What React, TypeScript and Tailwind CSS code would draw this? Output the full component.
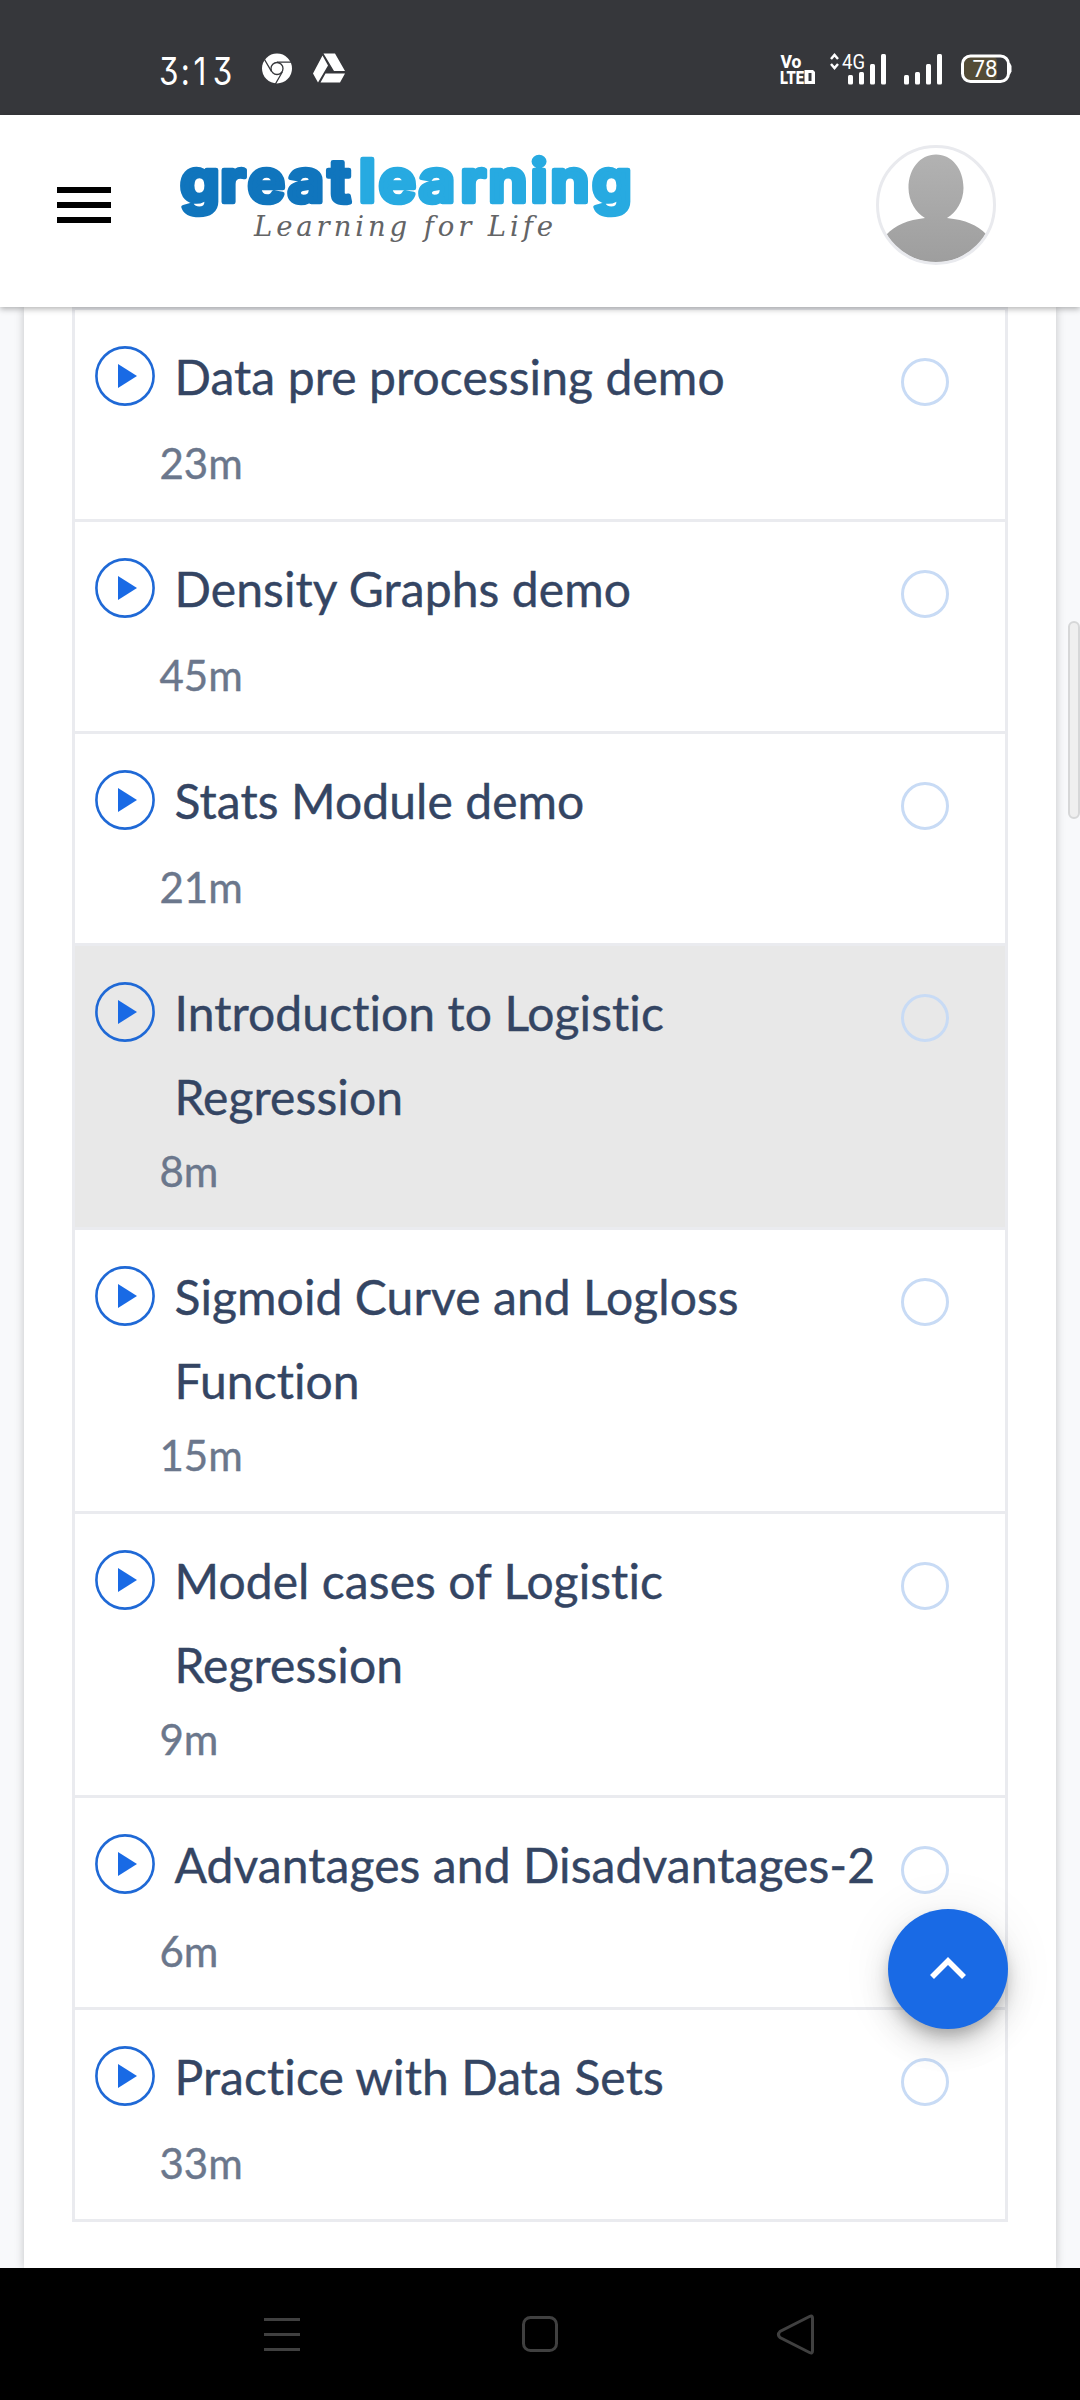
const lessons = [
  { title: ['Data pre processing demo'], time: '23m' },
  { title: ['Density Graphs demo'], time: '45m' },
  { title: ['Stats Module demo'], time: '21m' },
  { title: ['Introduction to Logistic', 'Regression'], time: '8m', active: true },
  { title: ['Sigmoid Curve and Logloss', 'Function'], time: '15m' },
  { title: ['Model cases of Logistic', 'Regression'], time: '9m' },
  { title: ['Advantages and Disadvantages-2'], time: '6m' },
  { title: ['Practice with Data Sets'], time: '33m' },
];

function StatusBar() {
  return (
    <div className="flex h-[115px] shrink-0 items-start bg-[#36373b] pl-[159px] pt-[53px] text-white">
      <svg className="block shrink-0 overflow-visible" width="103" height="34" viewBox="159 53 103 34">
        <g transform="translate(159 85) scale(0.84 1)">
          <text x="0 26 41 64" y="0" fill="#fff" fontFamily="Inter" fontSize="37.5" className="[font-feature-settings:'cv09']">3:13</text>
        </g>
      </svg>
      <svg className="block shrink-0" width="84" height="32" viewBox="262 56 84 32">
        <circle cx="277" cy="71.5" r="15" fill="#fff" />
        <circle cx="277" cy="71.5" r="6" fill="none" stroke="#36373b" strokeWidth="1.3" />
        <path d="M277 65.2H291M271.6 74.7L264.5 62.5M282.4 74.7L275.4 87" stroke="#36373b" strokeWidth="1.3" />
        <path d="M323.500 56.500H335L345 74H334Z M322.500 58.500L328 68.500L318 85.500L313 76.500Z M325.500 76.500H345L340 85.500H320.500Z" fill="#fff" />
      </svg>
      <svg className="ml-[434px] block shrink-0 overflow-visible" width="232" height="32" viewBox="780 56 232 32" fill="#fff">
        <text x="780.5" y="71" fontFamily="Roboto" fontWeight="800" fontSize="19" textLength="21" lengthAdjust="spacingAndGlyphs">Vo</text>
        <text x="780" y="87" fontFamily="Roboto" fontWeight="900" fontSize="19" textLength="24" lengthAdjust="spacingAndGlyphs">LTE</text>
        <path fillRule="evenodd" d="M804.500 73H813L815 75V87H804.500ZM808.500 76V84H811.500V76Z" />
        <path d="M831 62L834.500 58L838 62M831 67L834.500 71L838 67" fill="none" stroke="#fff" strokeWidth="2.500" />
        <text x="842" y="71.500" fontFamily="Roboto" fontSize="21" textLength="23" lengthAdjust="spacingAndGlyphs">4G</text>
        <rect x="848" y="78" width="5" height="9.500" rx="1.500" />
        <rect x="859" y="75" width="5" height="12.500" rx="1.500" />
        <rect x="870" y="67" width="5" height="20.500" rx="1.500" />
        <rect x="881" y="57" width="5" height="30.500" rx="1.500" />
        <rect x="904" y="78" width="5" height="9.500" rx="1.500" />
        <rect x="915" y="75" width="5" height="12.500" rx="1.500" />
        <rect x="926" y="67" width="5" height="20.500" rx="1.500" />
        <rect x="937" y="57" width="5" height="30.500" rx="1.500" />
        <rect x="963" y="59" width="34" height="25" rx="5" fill="#544c36" />
        <rect x="962.500" y="59" width="46" height="25.500" rx="8" fill="none" stroke="#fff" strokeWidth="3" />
        <path d="M1009 66h1l1.500 3v5.500l-1.500 3h-1z" />
        <text x="972.500" y="80" fontFamily="Roboto" fontSize="23" textLength="25" lengthAdjust="spacingAndGlyphs">78</text>
      </svg>
    </div>
  );
}

function Header() {
  return (
    <header className="relative z-10 flex h-[192px] shrink-0 items-start bg-white pl-[57px] pt-[30px] shadow-[0_2px_6px_rgba(0,0,0,0.3)]">
      <div className="mt-[42px] flex w-[54px] flex-col gap-[9px]">
        <div className="h-[6px] bg-black" />
        <div className="h-[6px] bg-black" />
        <div className="h-[6px] bg-black" />
      </div>
      <svg className="ml-[59px] block" width="480" height="110" viewBox="170 145 480 110">
        <g transform="translate(180 201.500) scale(1.07 1)" fontFamily="Inter" fontWeight="700" fontSize="59" strokeWidth="4.500" strokeLinejoin="round" strokeLinecap="round">
          <text x="0 37.500 63 100.500 138" y="0" fill="#1075bd" stroke="#1075bd">great</text>
          <text x="167 185.500 223 262 288 327.500 346 385" y="0" fill="#27aae1" stroke="#27aae1">learning</text>
        </g>
        <text x="254" y="236" fontFamily="'DejaVu Serif'" fontStyle="italic" fontSize="27.500" fill="#636466" textLength="299">Learning for Life</text>
      </svg>
      <svg className="ml-[226px] block" width="120" height="120" viewBox="0 0 120 120">
        <defs>
          <linearGradient id="person" x1="0" y1="10" x2="0" y2="117" gradientUnits="userSpaceOnUse">
            <stop stopColor="#b2b2b2" />
            <stop offset="1" stopColor="#9e9e9e" />
          </linearGradient>
          <clipPath id="round"><circle cx="60" cy="60" r="57.500" /></clipPath>
        </defs>
        <g clipPath="url(#round)" fill="url(#person)">
          <path d="M60 9.500C76 9.500 87.500 24 87.500 43C87.500 56 80 68 71 73C90 75 101 80 110 89V120H10V90C19 80 32 75 49 73C40 68 32.500 56 32.500 43C32.500 24 44 9.500 60 9.500Z" />
        </g>
        <circle cx="60" cy="60" r="58.500" fill="none" stroke="#e9eaee" strokeWidth="3" />
      </svg>
    </header>
  );
}

function Lesson({ title, time, active }: { title: string[]; time: string; active?: boolean }) {
  const two = title.length > 1;
  return (
    <li className={`flex items-start border-b-[3px] border-[#eaebef] pl-[20px] ${two ? 'h-[284px]' : 'h-[212px]'} ${active ? 'bg-[#e8e8e8]' : 'bg-white'}`}>
      <svg className="mt-[36px] block shrink-0" width="60" height="60" viewBox="0 0 60 60">
        <circle cx="30" cy="30" r="28.600" fill="none" stroke="#1f69d6" strokeWidth="2.600" />
        <path d="M23 18V42L42 30Z" fill="#196ae5" />
      </svg>
      <div className="ml-[4.500px] mt-[25px] w-[741.500px] shrink-0 whitespace-nowrap font-['Lato'] [-webkit-text-stroke:0.4px] [font-variant-ligatures:none]">
        <div className="pl-[15px] text-[48px] leading-[84px] tracking-[0.08px] text-[#344563]">
          {title.map((line) => (
            <div key={line}>{line}</div>
          ))}
        </div>
        <div className={`text-[42px] leading-[72px] text-[#6b778c] ${two ? 'mt-[-4px]' : 'mt-[8px]'}`}>{time}</div>
      </div>
      <div className="mt-[48px] size-[48px] shrink-0 rounded-full border-[3px] border-[#c8dbf5]" />
    </li>
  );
}

function NavBar() {
  return (
    <nav className="relative z-10 flex h-[132px] shrink-0 items-start bg-black pl-[264px] pt-[46px]">
      <svg className="block" width="552" height="42" viewBox="264 2314 552 42" fill="none" stroke="#404040" strokeWidth="3">
        <path d="M264 2319.500H300M264 2334.500H300M264 2349.500H300" />
        <rect x="523.500" y="2317.500" width="33" height="33" rx="7" />
        <path d="M809.500 2316.500L780 2331.500Q777 2334.500 780 2337.500L809.500 2352.500Q812.500 2354 812.500 2351V2318Q812.500 2315 809.500 2316.500Z" />
      </svg>
    </nav>
  );
}

export default function App() {
  return (
    <div className="relative flex h-[2400px] w-[1080px] flex-col overflow-hidden bg-[#f8f9fb]">
      <StatusBar />
      <Header />
      <main className="mx-[24px] flex-1 bg-white px-[48px] shadow-[0_0_9px_rgba(0,0,0,0.22)]">
        <ul className="border-x-[3px] border-t-[3px] border-[#eaebef]">
          {lessons.map((l, i) => (
            <Lesson key={i} {...l} />
          ))}
        </ul>
      </main>
      <NavBar />
      <div className="absolute left-[1068px] top-[621px] h-[198px] w-[12px] rounded-[6px] border-2 border-[#d6d7d8] bg-[#efefef]" />
      <button className="absolute left-[888px] top-[1909px] flex size-[120px] items-center justify-center rounded-full bg-[#196ae5] pb-[2px] shadow-[0_9px_15px_-3px_rgba(0,0,0,0.25),0_18px_30px_rgba(0,0,0,0.12),0_3px_54px_rgba(0,0,0,0.08)]">
        <svg width="36" height="22" viewBox="0 0 36 22" fill="none" stroke="#fff" strokeWidth="5.600">
          <path d="M2 20L18 4L34 20" />
        </svg>
      </button>
    </div>
  );
}
